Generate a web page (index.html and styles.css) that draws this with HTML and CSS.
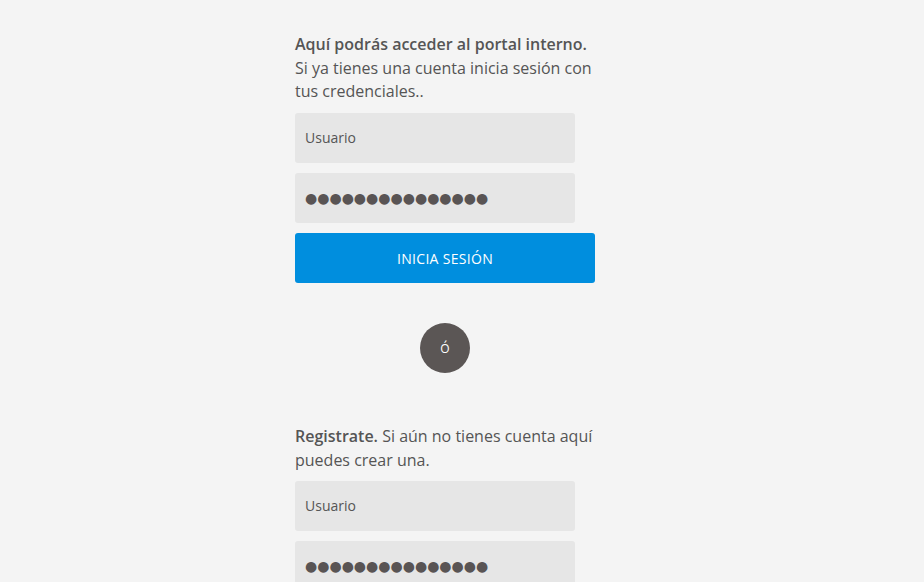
FILE: index.html
```html
<!DOCTYPE html>
<html lang="es">
<head>
<meta charset="utf-8">
<link rel="stylesheet" href="styles.css">
</head>
<body>
<main class="page">
  <section class="panel">
    <p class="intro"><span class="strong">Aquí podrás acceder al portal interno.</span><br>Si ya tienes una cuenta inicia sesión con tus credenciales..</p>
    <input class="field" type="text" placeholder="Usuario">
    <input class="field dots" type="text" value="●●●●●●●●●●●●●●●" aria-label="Contraseña">
    <button class="btn" type="button">INICIA SESIÓN</button>
    <div class="or-wrap"><span class="or">Ó</span></div>
    <p class="intro reg"><span class="strong">Registrate.</span> Si aún no tienes cuenta aquí puedes crear una.</p>
    <input class="field" type="text" placeholder="Usuario">
    <input class="field dots" type="text" value="●●●●●●●●●●●●●●●" aria-label="Contraseña">
  </section>
</main>
</body>
</html>
```
FILE: styles.css
```css
html, body {
  margin: 0;
  padding: 0;
  background: #f4f4f4;
  height: 100%;
  overflow: hidden;
}
body {
  font-family: "Open Sans", "Liberation Sans", sans-serif;
  color: #555;
}
.page {
  padding: 33px 0 0 295px;
}
.panel {
  width: 300px;
  display: flex;
  flex-direction: column;
  align-items: flex-start;
}
.intro {
  margin: 0 0 9px;
  font-size: 16px;
  line-height: 23.5px;
}
.strong {
  font-weight: 600;
}
.field {
  box-sizing: border-box;
  width: 280px;
  height: 50px;
  margin: 0 0 10px;
  padding: 0 10px;
  border: 0;
  border-radius: 3px;
  background: #e6e6e6;
  font-family: "Open Sans", "Liberation Sans", sans-serif;
  font-size: 14px;
  color: #5a5555;
  outline: none;
}
.field::placeholder {
  color: #555;
  opacity: 1;
}
.dots {
  font-family: "DejaVu Sans", sans-serif;
  font-size: 14px;
  color: #595454;
}
.btn {
  box-sizing: border-box;
  width: 300px;
  height: 50px;
  padding: 1px 0 0;
  border: 0;
  border-radius: 3px;
  background: #008ede;
  color: #fff;
  font-family: "Open Sans", "Liberation Sans", sans-serif;
  font-size: 14px;
  letter-spacing: 0.3px;
}
.or-wrap {
  width: 300px;
  display: flex;
  justify-content: center;
  margin: 40px 0 51px;
}
.or {
  width: 50px;
  height: 50px;
  border-radius: 50%;
  background: #5b5655;
  color: #fff;
  font-size: 12px;
  padding-top: 1px;
  box-sizing: border-box;
  display: flex;
  align-items: center;
  justify-content: center;
}
.reg {
  line-height: 24px;
}
```
